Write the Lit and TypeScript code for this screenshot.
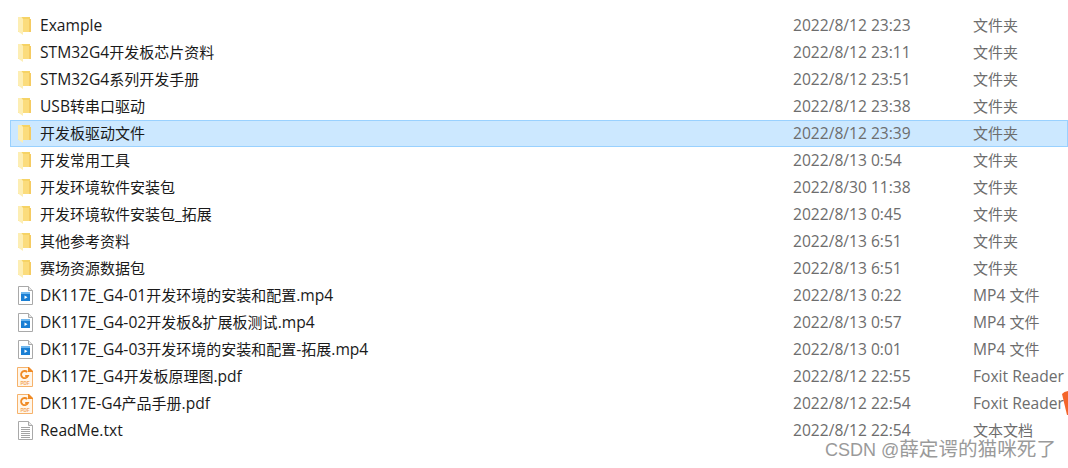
import { LitElement, html, css, svg } from 'lit';
import { customElement } from 'lit/decorators.js';

type Kind = 'folder' | 'video' | 'pdf' | 'text';

interface Row {
  name: string;
  date: string;
  type: string;
  kind: Kind;
  selected?: boolean;
}

const rows: Row[] = [
  { name: 'Example', date: '2022/8/12 23:23', type: '文件夹', kind: 'folder' },
  { name: 'STM32G4开发板芯片资料', date: '2022/8/12 23:11', type: '文件夹', kind: 'folder' },
  { name: 'STM32G4系列开发手册', date: '2022/8/12 23:51', type: '文件夹', kind: 'folder' },
  { name: 'USB转串口驱动', date: '2022/8/12 23:38', type: '文件夹', kind: 'folder' },
  { name: '开发板驱动文件', date: '2022/8/12 23:39', type: '文件夹', kind: 'folder', selected: true },
  { name: '开发常用工具', date: '2022/8/13 0:54', type: '文件夹', kind: 'folder' },
  { name: '开发环境软件安装包', date: '2022/8/30 11:38', type: '文件夹', kind: 'folder' },
  { name: '开发环境软件安装包_拓展', date: '2022/8/13 0:45', type: '文件夹', kind: 'folder' },
  { name: '其他参考资料', date: '2022/8/13 6:51', type: '文件夹', kind: 'folder' },
  { name: '赛场资源数据包', date: '2022/8/13 6:51', type: '文件夹', kind: 'folder' },
  { name: 'DK117E_G4-01开发环境的安装和配置.mp4', date: '2022/8/13 0:22', type: 'MP4 文件', kind: 'video' },
  { name: 'DK117E_G4-02开发板&扩展板测试.mp4', date: '2022/8/13 0:57', type: 'MP4 文件', kind: 'video' },
  { name: 'DK117E_G4-03开发环境的安装和配置-拓展.mp4', date: '2022/8/13 0:01', type: 'MP4 文件', kind: 'video' },
  { name: 'DK117E_G4开发板原理图.pdf', date: '2022/8/12 22:55', type: 'Foxit Reader', kind: 'pdf' },
  { name: 'DK117E-G4产品手册.pdf', date: '2022/8/12 22:54', type: 'Foxit Reader', kind: 'pdf' },
  { name: 'ReadMe.txt', date: '2022/8/12 22:54', type: '文本文档', kind: 'text' },
];

// CJK runs are set a little smaller than the latin text around them
function runs(text: string) {
  return text.split(/([\u4e00-\u9fff]+)/).map((part, i) =>
    i % 2 ? html`<span class="cjk">${part}</span>` : part
  );
}

const page = svg`<path d="M1.5 .5H11.5L15.5 4.5V18.5H1.5Z" fill="#fff" stroke="#a9a9a9"/><path d="M11.5 .5V4.5H15.5" fill="#e8e8e8" stroke="#a9a9a9"/>`;

const icons: Record<Kind, unknown> = {
  folder: svg`
    <path d="M1 1H13V16H1Z" fill="#f6d365"/>
    <path d="M6 3H14V16H6Z" fill="#fbdc7c"/>
    <path d="M12 3H14V16H12Z" fill="#f5cb62"/>
    <path d="M1 1H4.5L6 3V19L1 15.5Z" fill="#fdeeb4"/>`,
  video: svg`${page}
    <rect x="4" y="6" width="9" height="9" fill="#1a7fd4"/>
    <rect x="4" y="6" width="9" height="2" fill="#6fb7ee"/>
    <path d="M7.5 9.5L10.5 11.2L7.5 13Z" fill="#fff"/>`,
  pdf: svg`
    <path d="M.5 .5H11.5L15.5 4.5V19.5H.5Z" fill="#fff6ea" stroke="#f6b26b"/>
    <path d="M11 0H12L16 4V5H11Z" fill="#f08a24"/>
    <path d="M10.2 5A3.6 3.6 0 1 0 11 9H8.2" fill="none" stroke="#f08a24" stroke-width="1.8"/>
    <text class="pdf" x="8" y="17.5">PDF</text>`,
  text: svg`${page}
    <path d="M4 6.5H13M4 8.5H13M4 10.5H13M4 12.5H13M4 14.5H13M4 16.5H13" stroke="#a3a3a3"/>`,
};

@customElement('app-root')
export class AppRoot extends LitElement {
  static styles = css`
    :host {
      display: block;
      position: relative;
      width: 1068px;
      height: 468px;
      overflow: hidden;
      background: #fff;
      font-family: 'Open Sans', 'Noto Sans CJK SC', sans-serif;
      font-size: 15.6px;
      line-height: 18px;
    }

    .list {
      display: flex;
      flex-direction: column;
      padding-top: 12px;
      padding-left: 10px;
    }

    .row {
      display: grid;
      grid-template-columns: 783px 180px 1fr;
      align-items: center;
      height: 27px;
      box-sizing: border-box;
      white-space: nowrap;
      color: #6d6d6d;
    }

    .row.selected {
      background: #cce8ff;
      box-shadow: inset 0 0 0 1px #99d1ff;
    }

    .name {
      display: flex;
      align-items: center;
      gap: 6px;
      padding-left: 7px;
      color: #1a1a1a;
    }

    .text {
      padding-bottom: 1px;
    }

    .cjk {
      font-size: 15px;
    }

    svg {
      width: 17px;
      height: 20px;
      flex: none;
    }

    .pdf {
      font-family: 'Liberation Sans', sans-serif;
      font-size: 4.6px;
      font-weight: 700;
      text-anchor: middle;
      fill: #f4a65c;
    }

    .mark {
      position: absolute;
      right: 0;
      top: 391px;
      width: 6px;
      height: 24px;
    }

    .watermark {
      position: absolute;
      right: 12px;
      top: 440px;
      font-family: 'Liberation Sans', 'Noto Sans CJK SC', sans-serif;
      font-size: 18px;
      color: #9a9a9a;
      white-space: nowrap;
    }

    .watermark .cjk {
      font-size: 19.6px;
    }
  `;

  render() {
    return html`
      <div class="list">
        ${rows.map(
          (r) => html`
            <div class="row ${r.selected ? 'selected' : ''}">
              <div class="name">
                <svg viewBox="0 0 17 20">${icons[r.kind]}</svg>
                <span class="text">${runs(r.name)}</span>
              </div>
              <span class="text">${r.date}</span>
              <span class="text">${runs(r.type)}</span>
            </div>
          `
        )}
      </div>
      <svg class="mark" viewBox="0 0 6 24"><path d="M0 3Q2 .5 6 0V24H5Z" fill="#f4652a"/></svg>
      <div class="watermark">${runs('CSDN @薛定谔的猫咪死了')}</div>
    `;
  }
}
